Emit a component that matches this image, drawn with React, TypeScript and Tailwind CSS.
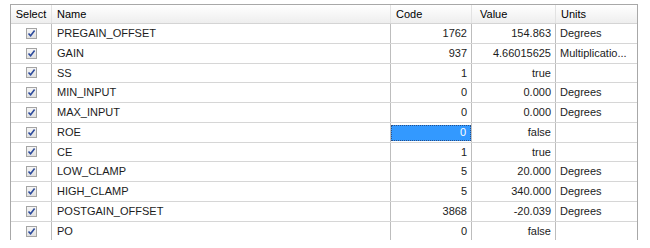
import React from 'react';

type Row = {
  name: string;
  code: string;
  value: string;
  units: string;
  selected?: boolean;
};

const rows: Row[] = [
  { name: 'PREGAIN_OFFSET', code: '1762', value: '154.863', units: 'Degrees' },
  { name: 'GAIN', code: '937', value: '4.66015625', units: 'Multiplicatio...' },
  { name: 'SS', code: '1', value: 'true', units: '' },
  { name: 'MIN_INPUT', code: '0', value: '0.000', units: 'Degrees' },
  { name: 'MAX_INPUT', code: '0', value: '0.000', units: 'Degrees' },
  { name: 'ROE', code: '0', value: 'false', units: '', selected: true },
  { name: 'CE', code: '1', value: 'true', units: '' },
  { name: 'LOW_CLAMP', code: '5', value: '20.000', units: 'Degrees' },
  { name: 'HIGH_CLAMP', code: '5', value: '340.000', units: 'Degrees' },
  { name: 'POSTGAIN_OFFSET', code: '3868', value: '-20.039', units: 'Degrees' },
  { name: 'PO', code: '0', value: 'false', units: '' },
];

function CheckBox() {
  return (
    <div className="w-[11px] h-[11px] border border-[#a4a4a4] bg-gradient-to-b from-[#f6f6f6] to-[#e0e0e0] flex items-center justify-center">
      <svg width="9" height="9" viewBox="0 0 9 9">
        <path d="M1.5 4.5 L3.6 6.8 L7.6 1.6" fill="none" stroke="#2c4a9c" strokeWidth="1.6" />
      </svg>
    </div>
  );
}

export default function App() {
  const head = 'h-[18px] flex items-center px-[5px] border-r border-[#e2e2e2]';
  const cell = 'flex items-center border-r border-[#bdbdbd] overflow-hidden whitespace-nowrap';

  return (
    <div className="w-[650px] h-[248px] bg-white overflow-hidden pt-[4px] pl-[10px] font-['Liberation_Sans',Arial,sans-serif] text-[11px] text-[#1c1c1c]">
      <div className="w-[628px] h-[236px] overflow-hidden border-t border-l border-r border-[#a8a8a8]">
        {/* header */}
        <div className="grid grid-cols-[41px_339px_81px_84px_81px] bg-gradient-to-b from-[#ffffff] to-[#eeeeee] border-b border-[#d4d4d4] text-black">
          <div className={head + ' justify-center px-0'}>Select</div>
          <div className={head}>Name</div>
          <div className={head}>Code</div>
          <div className={head + ' pl-[8px]'}>Value</div>
          <div className={head + ' border-r-0'}>Units</div>
        </div>

        {rows.map((r, i) => (
          <div
            key={r.name}
            className={
              'grid grid-cols-[41px_339px_81px_84px_81px] h-[19.78px] ' +
              (i === rows.length - 1 ? '' : 'border-b border-[#d6d6d6]')
            }
          >
            <div className={cell + ' justify-center pl-[1px]'}>
              <CheckBox />
            </div>
            <div className={cell + ' px-[5px]'}>{r.name}</div>
            <div className={cell + ' relative justify-end pr-[4px]'}>
              {r.selected ? (
                <div className="absolute inset-x-0 top-[2px] bottom-[1px] bg-[#3399ff] border border-dotted border-[#2a4f86] text-white flex items-center justify-end pr-[4px]">
                  {r.code}
                </div>
              ) : (
                r.code
              )}
            </div>
            <div className={cell + ' justify-end pr-[4px]'}>{r.value}</div>
            <div className="flex items-center px-[4px] whitespace-nowrap">{r.units}</div>
          </div>
        ))}
      </div>
    </div>
  );
}
